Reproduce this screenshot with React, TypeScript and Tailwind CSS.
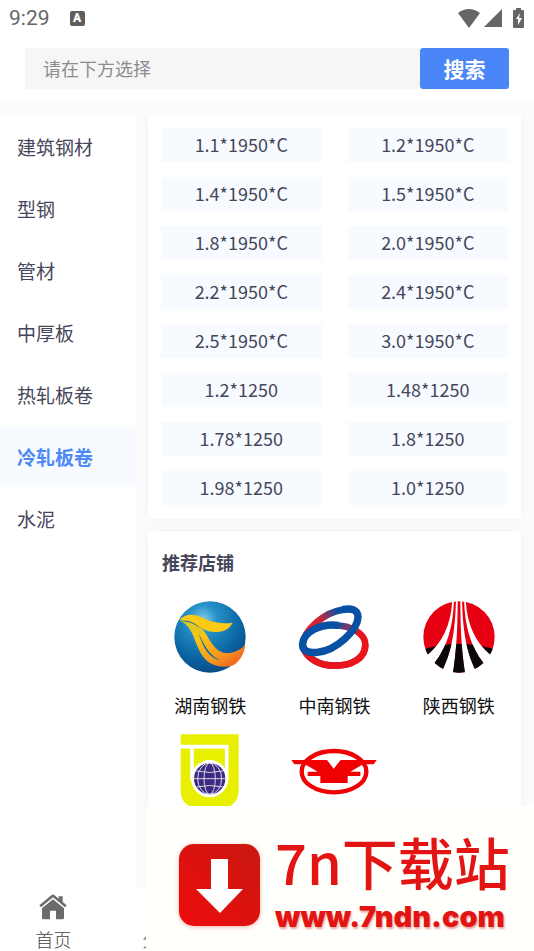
import { useState } from "react";

const categories = ["建筑钢材", "型钢", "管材", "中厚板", "热轧板卷", "冷轧板卷", "水泥"];

const specs = [
  "1.1*1950*C", "1.2*1950*C",
  "1.4*1950*C", "1.5*1950*C",
  "1.8*1950*C", "2.0*1950*C",
  "2.2*1950*C", "2.4*1950*C",
  "2.5*1950*C", "3.0*1950*C",
  "1.2*1250", "1.48*1250",
  "1.78*1250", "1.8*1250",
  "1.98*1250", "1.0*1250",
];

function HunanLogo() {
  return (
    <svg viewBox="72 33 216 216" className="size-[72px]" aria-hidden="true">
      <defs>
        <radialGradient id="hnGlobe" cx="0.4" cy="0.25" r="0.8">
          <stop offset="0" stopColor="#7fcbe6" />
          <stop offset="0.25" stopColor="#2791c8" />
          <stop offset="0.65" stopColor="#0b67a5" />
          <stop offset="1" stopColor="#084a82" />
        </radialGradient>
        <linearGradient id="hnFlame" x1="0" y1="0" x2="1" y2="1">
          <stop offset="0" stopColor="#c9cf2a" />
          <stop offset="0.35" stopColor="#fbc315" />
          <stop offset="0.7" stopColor="#f79420" />
          <stop offset="1" stopColor="#ee4b1f" />
        </linearGradient>
      </defs>
      <circle cx="180" cy="141" r="107" fill="url(#hnGlobe)" />
      <path d="M88 90C104 72 130 70 154 82C184 98 216 103 248 98C238 118 218 126 196 126C166 126 154 112 134 103C118 96 103 92 88 90Z" fill="#fcc917" />
      <path d="M90 94C124 90 152 106 168 132C184 160 196 180 220 188C246 192 270 182 286 164C284 192 268 214 250 226C218 236 186 228 166 208C144 184 138 154 126 130C116 110 104 98 90 94Z" fill="url(#hnFlame)" />
      <path d="M144 130C160 152 168 190 210 211C182 203 168 184 158 162C151 147 149 139 144 130Z" fill="#0d69a6" />
      <path d="M94 93C116 90 136 98 150 114C134 101 116 95 94 93Z" fill="#0d69a6" />
    </svg>
  );
}

function ZhongnanLogo() {
  return (
    <svg viewBox="55 33 216 216" className="size-[72px]" aria-hidden="true">
      <defs>
        <linearGradient id="znTop" gradientUnits="userSpaceOnUse" x1="95" y1="120" x2="178" y2="70">
          <stop offset="0" stopColor="#ea1c24" />
          <stop offset="0.45" stopColor="#c0283c" />
          <stop offset="1" stopColor="#0850a4" />
        </linearGradient>
        <linearGradient id="znMid" gradientUnits="userSpaceOnUse" x1="175" y1="100" x2="240" y2="135">
          <stop offset="0" stopColor="#0850a4" />
          <stop offset="0.45" stopColor="#8a3560" />
          <stop offset="1" stopColor="#e8141c" />
        </linearGradient>
      </defs>
      <path d="M68 166C74 118 134 66 194 58" fill="none" stroke="url(#znTop)" strokeWidth="20" />
      <path d="M69 164C78 205 120 227 166 227C216 227 257 205 257 164C257 132 216 106 165 106" fill="none" stroke="url(#znMid)" strokeWidth="20" />
      <path d="M69 172C85 208 120 227 166 227C216 227 257 205 257 164" fill="none" stroke="#e9151c" strokeWidth="20" />
      <path d="M188 59C214 54 236 58 235 82C234 118 172 182 112 187C82 190 66 179 69 160C74 126 120 100 176 106" fill="none" stroke="#0850a4" strokeWidth="22" />
    </svg>
  );
}

function ShaanxiLogo() {
  return (
    <svg viewBox="67 37 216 216" className="size-[72px]" aria-hidden="true">
      <defs>
        <clipPath id="sxDisc">
          <circle cx="175" cy="145" r="107" />
        </clipPath>
        <clipPath id="sxRays">
          <path d="M155 30H60V188L80 199C126 160 152 108 155 30Z" />
          <path d="M195 30H290V188L270 199C224 160 198 108 195 30Z" />
          <path d="M160 30H166C164 130 152 190 126 243L101 224C142 170 158 110 160 30Z" />
          <path d="M190 30H184C186 130 198 190 224 243L249 224C208 170 192 110 190 30Z" />
          <path d="M171 30H179C179 110 182 182 193 253H157C168 182 171 110 171 30Z" />
        </clipPath>
      </defs>
      <g clipPath="url(#sxRays)">
        <g clipPath="url(#sxDisc)">
          <rect x="67" y="37" width="216" height="216" fill="#e60012" />
          <path d="M67 182Q175 150 283 182V253H67Z" fill="#080808" />
        </g>
      </g>
    </svg>
  );
}

function GlobeLogo() {
  return (
    <svg viewBox="72 39 216 216" className="size-[72px] overflow-visible" aria-hidden="true">
      <path d="M92 43H266V212C266 242 244 264 216 264H144C112 264 92 242 92 212Z" fill="#e9ef00" />
      <path d="M90 80H230V180M126 84V180" fill="none" stroke="#fff" strokeWidth="11" />
      <circle cx="179" cy="176" r="56" fill="#fff" />
      <circle cx="179" cy="176" r="47" fill="#3b2a80" />
      <g fill="none" stroke="#d8d4ea" strokeWidth="3">
        <ellipse cx="179" cy="176" rx="17" ry="47" />
        <ellipse cx="179" cy="176" rx="36" ry="47" />
        <path d="M132 176H226M139 153Q179 162 219 153M139 201Q179 192 219 201" />
      </g>
    </svg>
  );
}

function WingLogo() {
  return (
    <svg viewBox="445 39 216 216" className="size-[72px] overflow-visible" aria-hidden="true">
      <ellipse cx="553" cy="155" rx="97" ry="62" fill="none" stroke="#f00000" strokeWidth="13" />
      <path d="M425 120H532L552 146L573 120H681L672 133H640L602 155H632V168H594V189H512V168H474V155H504L466 133H434Z" fill="#f00000" />
    </svg>
  );
}

const shops = [
  { name: "湖南钢铁", logo: <HunanLogo /> },
  { name: "中南钢铁", logo: <ZhongnanLogo /> },
  { name: "陕西钢铁", logo: <ShaanxiLogo /> },
  { name: "", logo: <GlobeLogo /> },
  { name: "", logo: <WingLogo /> },
];

function StatusBar() {
  return (
    <div className="flex h-9 items-center pl-[9px] pr-[10px] text-[#666]">
      <span className="font-[Roboto,sans-serif] text-[21px] leading-9">9:29</span>
      <span className="ml-5 flex size-[15px] items-center justify-center rounded-[2px] bg-[#5f5f5f] font-[Roboto,sans-serif] text-[12px] font-black leading-none text-white">
        A
      </span>
      <svg viewBox="0 0 22 19" className="ml-auto h-[19px] w-[22px]" fill="currentColor" aria-hidden="true">
        <path d="M0 4Q11-4 22 4L11 19Z" />
      </svg>
      <svg viewBox="0 0 18 18" className="ml-1 size-[18px]" fill="currentColor" aria-hidden="true">
        <path d="M18 0V18H0Z" />
      </svg>
      <svg viewBox="0 0 11 20" className="ml-[11px] h-5 w-[11px]" aria-hidden="true">
        <path d="M3 0H8V2H10Q11 2 11 3V19Q11 20 10 20H1Q0 20 0 19V3Q0 2 1 2H3Z" fill="#666" />
        <path d="M7 5L3 11H5V17L9 10H6Z" fill="#fff" />
      </svg>
    </div>
  );
}

export default function App() {
  const [active, setActive] = useState("冷轧板卷");
  const [keyword, setKeyword] = useState("");

  return (
    <div className="relative flex h-screen flex-col overflow-hidden bg-[#fcfcfc] font-['Noto_Sans_CJK_SC',sans-serif] text-[#46465a]">
      <header className="shrink-0 bg-white">
        <StatusBar />
        <div className="flex px-[25px] pb-[10px] pt-3">
          <input
            type="text"
            aria-label="搜索"
            placeholder="请在下方选择"
            value={keyword}
            onChange={(e) => setKeyword(e.target.value)}
            className="h-[41px] min-w-0 flex-1 bg-[#f6f6f6] px-[18px] pb-[2px] text-[18px] outline-none placeholder:text-[#8c8c90]"
          />
          <button className="h-[41px] w-[89px] rounded-[3px] bg-[#4a86f7] text-[21px] font-bold text-white">搜索</button>
        </div>
      </header>

      <main className="flex min-h-0 flex-1 pt-4">
        <aside className="flex w-[136px] shrink-0 flex-col gap-[2px] bg-white pt-[2px]">
          {categories.map((name) => (
            <button
              key={name}
              onClick={() => setActive(name)}
              className={`h-[60px] w-full pl-[17px] text-left text-[19px] ${
                active === name ? "bg-[#f7fbff] font-bold text-[#4d88f5]" : ""
              }`}
            >
              {name}
            </button>
          ))}
        </aside>

        <div className="flex min-w-0 flex-1 flex-col gap-3 overflow-hidden pl-3 pr-[13px]">
          <section className="grid shrink-0 grid-cols-2 gap-x-[26px] gap-y-[15px] rounded-b bg-white px-[13px] pb-[14px] pt-[13px] shadow-[0_0_10px_#f0f0f0]">
            {specs.map((spec) => (
              <button key={spec} className="h-[34px] bg-[#f7fbff] pb-[2px] text-[18px]">
                {spec}
              </button>
            ))}
          </section>

          {/* Recommended shops */}
          <section className="flex-1 rounded bg-white pt-[17px] shadow-[0_0_10px_#f0f0f0]">
            <h2 className="px-[14px] text-[18px] font-bold leading-7">推荐店铺</h2>
            <div className="mt-[25px] grid grid-cols-3 gap-y-[14px]">
              {shops.map((shop, i) => (
                <a key={i} href="#" className="flex flex-col items-center gap-[18px] text-[18px] leading-7 text-[#111]">
                  {shop.logo}
                  {shop.name && <span>{shop.name}</span>}
                </a>
              ))}
            </div>
          </section>
        </div>
      </main>

      <nav className="grid h-16 shrink-0 grid-cols-5 bg-white text-[18px] font-light leading-6 text-[#444]">
        <a href="#" className="flex flex-col items-center gap-[7px] pt-[7px]">
          <svg viewBox="118 314 84 78" className="h-[26px] w-7" fill="#6b6b6b" aria-hidden="true">
            <path d="M119 348L156 317Q160 314 164 317L177 328V321H189V338L201 348L196 354L160 324L124 354Z" />
            <path d="M127 357L160 330L193 357V386Q193 390 189 390H169V364H151V390H131Q127 390 127 386Z" />
          </svg>
          首页
        </a>
        <a href="#" className="flex flex-col items-center justify-end">分类</a>
      </nav>

      {/* Download site banner */}
      <div className="absolute bottom-0 left-[146px] right-0 flex h-[145px] items-center bg-[#fffffb] pl-[33px] pt-3">
        <svg viewBox="0 0 81 82" className="h-[82px] w-[81px] shrink-0 drop-shadow-[0_1px_2px_#f3b0a8]" aria-hidden="true">
          <defs>
            <linearGradient id="dl" x1="0" y1="1" x2="1" y2="0">
              <stop offset="0" stopColor="#ee0c0c" />
              <stop offset="1" stopColor="#c91812" />
            </linearGradient>
          </defs>
          <rect width="81" height="82" rx="15" fill="url(#dl)" />
          <path d="M32 15H49V45H64L41 69L17 45H32Z" fill="#fff" />
        </svg>
        <div className="ml-[15px] flex flex-col gap-2 whitespace-nowrap pb-2 text-[#e21414]">
          <p className="text-[56px] font-medium leading-[64px]">7n下载站</p>
          <p className="font-[Inter,sans-serif] text-[29px] font-black leading-8 [text-shadow:1px_2px_2px_#e8a8a0]">www.7ndn.com</p>
        </div>
      </div>
    </div>
  );
}
